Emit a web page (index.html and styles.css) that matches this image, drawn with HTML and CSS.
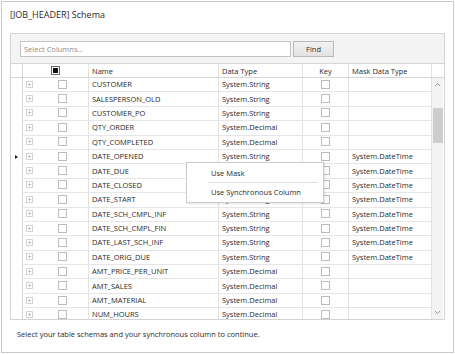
FILE: index.html
```html
<!DOCTYPE html>
<html lang="en">
<head>
  <meta charset="UTF-8">
  <title>Schema</title>
  <link rel="stylesheet" href="styles.css">
</head>
<body>
  <div class="window">
    <div class="title">[JOB_HEADER] Schema</div>

    <div class="panel">
      <!-- Busca de colunas -->
      <div class="search-row">
        <div class="search-input">Select Columns...</div>
        <div class="find-btn">Find</div>
      </div>

      <div class="grid">
        <div class="grid-head">
          <div class="cell rowhead"></div>
          <div class="cell sel"><span class="chk chk-all"></span></div>
          <div class="cell name">Name</div>
          <div class="cell type">Data Type</div>
          <div class="cell key center">Key</div>
          <div class="cell mask">Mask Data Type</div>
          <div class="cell scroll-head"></div>
        </div>

        <div class="grid-body">
          <div class="rows">
            <div class="row"><div class="cell rowhead"></div><div class="cell sel"><span class="exp"></span><span class="chk"></span></div><div class="cell name">CUSTOMER</div><div class="cell type">System.String</div><div class="cell key"><span class="chk"></span></div><div class="cell mask"></div></div>
            <div class="row"><div class="cell rowhead"></div><div class="cell sel"><span class="exp"></span><span class="chk"></span></div><div class="cell name">SALESPERSON_OLD</div><div class="cell type">System.String</div><div class="cell key"><span class="chk"></span></div><div class="cell mask"></div></div>
            <div class="row"><div class="cell rowhead"></div><div class="cell sel"><span class="exp"></span><span class="chk"></span></div><div class="cell name">CUSTOMER_PO</div><div class="cell type">System.String</div><div class="cell key"><span class="chk"></span></div><div class="cell mask"></div></div>
            <div class="row"><div class="cell rowhead"></div><div class="cell sel"><span class="exp"></span><span class="chk"></span></div><div class="cell name">QTY_ORDER</div><div class="cell type">System.Decimal</div><div class="cell key"><span class="chk"></span></div><div class="cell mask"></div></div>
            <div class="row"><div class="cell rowhead"></div><div class="cell sel"><span class="exp"></span><span class="chk"></span></div><div class="cell name">QTY_COMPLETED</div><div class="cell type">System.Decimal</div><div class="cell key"><span class="chk"></span></div><div class="cell mask"></div></div>
            <div class="row"><div class="cell rowhead"><span class="cur"></span></div><div class="cell sel"><span class="exp"></span><span class="chk"></span></div><div class="cell name">DATE_OPENED</div><div class="cell type">System.String</div><div class="cell key"><span class="chk"></span></div><div class="cell mask">System.DateTime</div></div>
            <div class="row"><div class="cell rowhead"></div><div class="cell sel"><span class="exp"></span><span class="chk"></span></div><div class="cell name">DATE_DUE</div><div class="cell type">System.String</div><div class="cell key"><span class="chk"></span></div><div class="cell mask">System.DateTime</div></div>
            <div class="row"><div class="cell rowhead"></div><div class="cell sel"><span class="exp"></span><span class="chk"></span></div><div class="cell name">DATE_CLOSED</div><div class="cell type">System.String</div><div class="cell key"><span class="chk"></span></div><div class="cell mask">System.DateTime</div></div>
            <div class="row"><div class="cell rowhead"></div><div class="cell sel"><span class="exp"></span><span class="chk"></span></div><div class="cell name">DATE_START</div><div class="cell type">System.String</div><div class="cell key"><span class="chk"></span></div><div class="cell mask">System.DateTime</div></div>
            <div class="row"><div class="cell rowhead"></div><div class="cell sel"><span class="exp"></span><span class="chk"></span></div><div class="cell name">DATE_SCH_CMPL_INF</div><div class="cell type">System.String</div><div class="cell key"><span class="chk"></span></div><div class="cell mask">System.DateTime</div></div>
            <div class="row"><div class="cell rowhead"></div><div class="cell sel"><span class="exp"></span><span class="chk"></span></div><div class="cell name">DATE_SCH_CMPL_FIN</div><div class="cell type">System.String</div><div class="cell key"><span class="chk"></span></div><div class="cell mask">System.DateTime</div></div>
            <div class="row"><div class="cell rowhead"></div><div class="cell sel"><span class="exp"></span><span class="chk"></span></div><div class="cell name">DATE_LAST_SCH_INF</div><div class="cell type">System.String</div><div class="cell key"><span class="chk"></span></div><div class="cell mask">System.DateTime</div></div>
            <div class="row"><div class="cell rowhead"></div><div class="cell sel"><span class="exp"></span><span class="chk"></span></div><div class="cell name">DATE_ORIG_DUE</div><div class="cell type">System.String</div><div class="cell key"><span class="chk"></span></div><div class="cell mask">System.DateTime</div></div>
            <div class="row"><div class="cell rowhead"></div><div class="cell sel"><span class="exp"></span><span class="chk"></span></div><div class="cell name">AMT_PRICE_PER_UNIT</div><div class="cell type">System.Decimal</div><div class="cell key"><span class="chk"></span></div><div class="cell mask"></div></div>
            <div class="row"><div class="cell rowhead"></div><div class="cell sel"><span class="exp"></span><span class="chk"></span></div><div class="cell name">AMT_SALES</div><div class="cell type">System.Decimal</div><div class="cell key"><span class="chk"></span></div><div class="cell mask"></div></div>
            <div class="row"><div class="cell rowhead"></div><div class="cell sel"><span class="exp"></span><span class="chk"></span></div><div class="cell name">AMT_MATERIAL</div><div class="cell type">System.Decimal</div><div class="cell key"><span class="chk"></span></div><div class="cell mask"></div></div>
            <div class="row"><div class="cell rowhead"></div><div class="cell sel"><span class="exp"></span><span class="chk"></span></div><div class="cell name">NUM_HOURS</div><div class="cell type">System.Decimal</div><div class="cell key"><span class="chk"></span></div><div class="cell mask"></div></div>
          </div>

          <!-- Barra de rolagem -->
          <div class="scrollbar">
            <svg class="arrow" width="7" height="5" viewBox="0 0 7 5"><path d="M1 4 L3.5 1.5 L6 4" fill="none" stroke="#9a9a9a" stroke-width="1"/></svg>
            <div class="track"><div class="thumb"></div></div>
            <svg class="arrow" width="7" height="5" viewBox="0 0 7 5"><path d="M1 1 L3.5 3.5 L6 1" fill="none" stroke="#9a9a9a" stroke-width="1"/></svg>
          </div>
        </div>
      </div>
    </div>

    <div class="footer">Select your table schemas and your synchronous column to continue.</div>

    <!-- Menu de contexto -->
    <div class="menu">
      <div class="menu-item">Use Mask</div>
      <div class="menu-sep"></div>
      <div class="menu-item">Use Synchronous Column</div>
    </div>
  </div>
</body>
</html>
```

FILE: styles.css
```css
body {
  margin: 0;
  background: #fff;
  font-family: "Open Sans", "Noto Sans", sans-serif;
  color: #2a2a2a;
}

.window {
  position: relative;
  margin: 1px;
  width: 453px;
  height: 352px;
  box-sizing: border-box;
  border: 1px solid #c9c9c9;
  display: flex;
  flex-direction: column;
}

.title {
  font-size: 9px;
  line-height: 14px;
  padding: 6px 0 0 8px;
  height: 14px;
  color: #2a2a2a;
}

.panel {
  margin: 11px 8px 0 8px;
  height: 287px;
  box-sizing: border-box;
  border: 1px solid #d3d3d3;
  background: #f4f4f4;
  display: flex;
  flex-direction: column;
}

.search-row {
  display: flex;
  gap: 2px;
  padding: 7px 0 0 9px;
  height: 16px;
}

.search-input {
  width: 271px;
  height: 16px;
  box-sizing: border-box;
  border: 1px solid #c4c4c4;
  background: #fff;
  font-size: 7.5px;
  line-height: 14px;
  padding-left: 3px;
  color: #8c8c8c;
}

.find-btn {
  width: 41px;
  height: 16px;
  box-sizing: border-box;
  border: 1px solid #b9b9b9;
  background: linear-gradient(#f2f2f2, #e2e2e2);
  font-size: 7.5px;
  line-height: 14px;
  text-align: center;
  color: #2a2a2a;
}

.grid {
  margin-top: 6px;
  flex: 1;
  border-top: 1px solid #d6d6d6;
  background: #fff;
  display: flex;
  flex-direction: column;
  overflow: hidden;
  font-size: 7.5px;
}

.grid-head {
  display: flex;
  height: 13px;
  border-bottom: 1px solid #d6d6d6;
}

.grid-body {
  flex: 1;
  display: flex;
  overflow: hidden;
}

.rows {
  width: 421px;
}

.row {
  display: flex;
  height: 14.4px;
}

.cell {
  box-sizing: border-box;
  border-right: 1px solid #e2e2e2;
  display: flex;
  align-items: center;
  padding-left: 3px;
  white-space: nowrap;
  overflow: hidden;
}

.row .cell {
  border-bottom: 1px solid #e6e6e6;
  padding-bottom: 1px;
}

.row .cell.rowhead {
  border-bottom: none;
}

.rowhead { width: 12px; padding: 0; border-right-color: #d6d6d6; }
.sel { width: 66px; padding-left: 3px; }
.name { width: 130px; }
.type { width: 84px; }
.key { width: 46px; justify-content: center; padding: 0; }
.mask { width: 83px; }
.scroll-head { width: 11px; border-right: none; }

.center { justify-content: center; padding: 0; }

.grid-head .sel { justify-content: center; padding: 0; }

.chk {
  display: inline-block;
  width: 9px;
  height: 9px;
  box-sizing: border-box;
  border: 1px solid #bdbdbd;
  background: #fff;
}

.chk-all {
  border-color: #6a6a6a;
  position: relative;
}

.chk-all::after {
  content: "";
  position: absolute;
  left: 1px;
  top: 1px;
  width: 5px;
  height: 5px;
  background: #111;
}

.exp {
  position: relative;
  display: inline-block;
  width: 7px;
  height: 7px;
  box-sizing: border-box;
  border: 1px solid #d2d2d2;
  margin-right: 25px;
}

.exp::before {
  content: "";
  position: absolute;
  left: 1px;
  top: 2px;
  width: 3px;
  height: 1px;
  background: #c4c4c4;
}

.exp::after {
  content: "";
  position: absolute;
  left: 2px;
  top: 1px;
  width: 1px;
  height: 3px;
  background: #c4c4c4;
}

.cur {
  width: 0;
  height: 0;
  margin-left: 4px;
  border-top: 2.5px solid transparent;
  border-bottom: 2.5px solid transparent;
  border-left: 3px solid #222;
}

.scrollbar {
  width: 11px;
  background: #f3f3f3;
  display: flex;
  flex-direction: column;
  align-items: center;
}

.arrow {
  margin: 4px 0;
}

.track {
  flex: 1;
  width: 100%;
  padding-top: 17px;
}

.thumb {
  height: 35px;
  width: 10px;
  margin-left: 1px;
  background: #cdcdcd;
}

.footer {
  font-size: 7.5px;
  line-height: 14px;
  padding: 7px 0 0 15px;
  color: #2a2a2a;
}

.menu {
  position: absolute;
  left: 184px;
  top: 160px;
  width: 138px;
  height: 41px;
  box-sizing: border-box;
  border: 1px solid #cbcbcb;
  background: #fff;
  box-shadow: 1px 1px 2px rgba(0, 0, 0, 0.12);
  font-size: 7.5px;
  color: #2a2a2a;
  padding-top: 2px;
}

.menu-item {
  height: 17px;
  line-height: 17px;
  padding-left: 24px;
}

.menu-sep {
  height: 1px;
  margin: 0 5px 1px 21px;
  background: #dedede;
}
```
